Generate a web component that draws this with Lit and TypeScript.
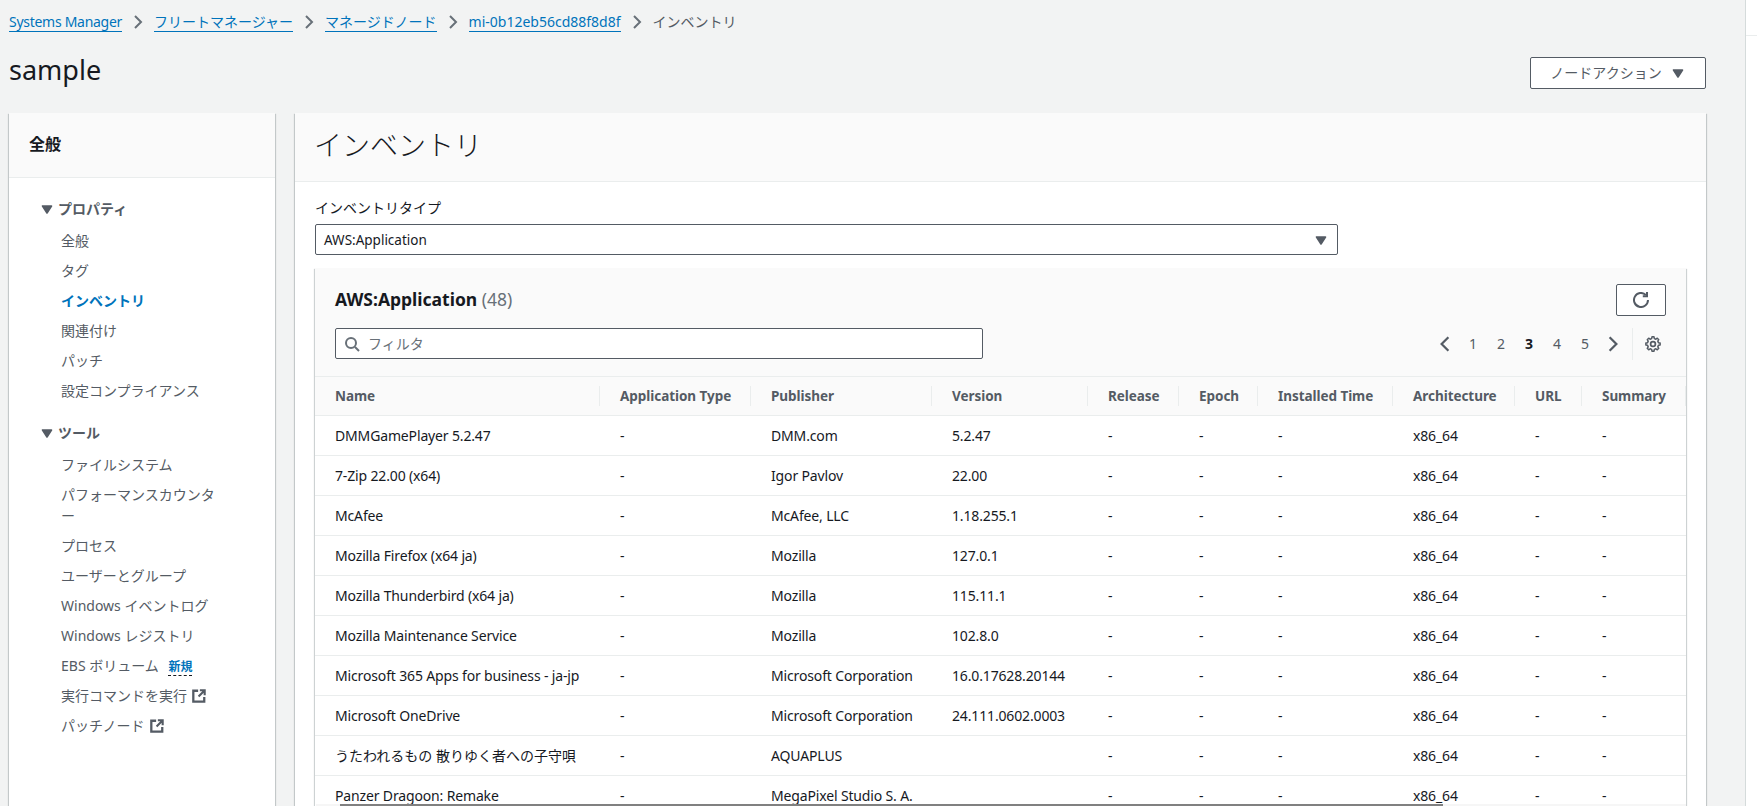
import { LitElement, html, css } from "lit";
import { customElement } from "lit/decorators.js";

const caret = html`<svg class="caret" viewBox="0 0 16 16"><path d="M3.5 5h9L8 12z" fill="#545b64" stroke="#545b64" stroke-width="1.6" stroke-linejoin="round"/></svg>`;
const chev = html`<svg class="chev" viewBox="0 0 16 16"><path d="M5 2l6 6-6 6" fill="none" stroke="#687078" stroke-width="2"/></svg>`;
const ext = html`<svg class="ext" viewBox="0 0 16 16"><path d="M7 2H1.5v12.5H14V9" fill="none" stroke="#545b64" stroke-width="2.6"/><path d="M9 1.5h5.5V7M14 2L7.5 8.5" fill="none" stroke="#545b64" stroke-width="2.4"/></svg>`;

function gearPath(): string {
  const pts: string[] = [];
  const teeth = 8;
  for (let i = 0; i < teeth; i++) {
    const a = (i / teeth) * Math.PI * 2;
    const w = Math.PI / teeth;
    const p = [[5.6, a - w * 0.62], [7.2, a - w * 0.36], [7.2, a + w * 0.36], [5.6, a + w * 0.62]];
    for (const [r, t] of p) pts.push(`${(8 + r * Math.cos(t)).toFixed(2)} ${(8 + r * Math.sin(t)).toFixed(2)}`);
  }
  return "M" + pts.join("L") + "Z";
}

const COLS = ["Name","Application Type","Publisher","Version","Release","Epoch","Installed Time","Architecture","URL","Summary"];
const ROWS: [string,string,string][] = [
  ["DMMGamePlayer 5.2.47","DMM.com","5.2.47"],
  ["7-Zip 22.00 (x64)","Igor Pavlov","22.00"],
  ["McAfee","McAfee, LLC","1.18.255.1"],
  ["Mozilla Firefox (x64 ja)","Mozilla","127.0.1"],
  ["Mozilla Thunderbird (x64 ja)","Mozilla","115.11.1"],
  ["Mozilla Maintenance Service","Mozilla","102.8.0"],
  ["Microsoft 365 Apps for business - ja-jp","Microsoft Corporation","16.0.17628.20144"],
  ["Microsoft OneDrive","Microsoft Corporation","24.111.0602.0003"],
  ["うたわれるもの 散りゆく者への子守唄","AQUAPLUS",""],
  ["Panzer Dragoon: Remake","MegaPixel Studio S. A.",""],
];

@customElement("app-root")
export class AppRoot extends LitElement {
  static styles = css`
    :host { display: block; width: 1757px; height: 806px; overflow: hidden; background: #fff; position: relative;
      font-family: "Noto Sans", "Noto Sans CJK JP", sans-serif; font-size: 14px; line-height: 20px; color: #16191f; }
    * { box-sizing: border-box; }
    .shell { display: flex; height: 806px; }
    .page { width: 1746px; height: 806px; background: #f2f3f3; border-right: 1px solid #d5dbdb; padding: 0 39px 0 9px; overflow: hidden; flex: none; }
    .side-rest { flex: 1; height: 806px; }
    .side-rest div { height: 36px; border-bottom: 1px solid #eaeded; }
    .crumbs { display: flex; align-items: center; height: 44px; }
    .crumbs a { color: #0073bb; border-bottom: 1px solid #0073bb; line-height: 18px; }
    .crumbs a.lat { letter-spacing: -.28px; }
    .crumbs span { color: #545b64; }
    .chev { width: 16px; height: 16px; margin: 0 8px; }
    .head { display: flex; justify-content: space-between; height: 69px; }
    h1 { margin: 9px 0 0; font-size: 27px; font-weight: 400; line-height: 34px; }
    .btn { width: 176px; height: 32px; margin-top: 13px; background: #fff; border: 1px solid #545b64; border-radius: 2px; display: flex; align-items: center; justify-content: center; gap: 8px; color: #545b64; }
    .caret { width: 16px; height: 16px; flex: none; }
    .cols { display: flex; gap: 20px; align-items: flex-start; }
    .card { background: #fff; box-shadow: 0 1px 1px 0 rgba(0,28,36,.3), 1px 1px 1px 0 rgba(0,28,36,.15), -1px 1px 1px 0 rgba(0,28,36,.15); height: 800px; flex: none; }
    .nav { width: 266px; }
    .nav-head { height: 65px; background: #fafafa; border-bottom: 1px solid #eaeded; padding: 19px 20px; font-size: 16px; font-weight: 700; line-height: 24px; }
    .nav-body { padding: 20px 0 0 30px; }
    .sec { display: flex; align-items: center; gap: 3px; height: 22px; font-weight: 700; color: #545b64; margin-bottom: 10px; }
    .sec.second { margin-top: 21px; }
    .item { display: block; width: 165px; margin: 0 0 9px 22px; line-height: 21px; color: #545b64; line-break: anywhere; }
    .item.active { color: #0073bb; font-weight: 700; }
    .new { color: #0073bb; font-weight: 700; font-size: 12px; border-bottom: 1px dashed #16191f; margin-left: 6px; line-height: 16px; display: inline-block; }
    .ext { width: 14px; height: 14px; vertical-align: -2px; margin-left: 5px; }
    .main { width: 1411px; }
    .main-head { height: 69px; background: #fafafa; border-bottom: 1px solid #eaeded; padding: 13px 19px; font-size: 28px; font-weight: 300; line-height: 38px; }
    .main-body { padding: 16px 20px 0; }
    label { display: block; line-height: 20px; margin-bottom: 6px; color: #16191f; }
    .select { height: 31px; width: 1023px; background: #fff; border: 1px solid #545b64; border-radius: 2px; display: flex; align-items: center; justify-content: space-between; padding: 0 8px 0 8px; margin-bottom: 13px; font-size: 13.5px; }
    .table { width: 1371px; background: #fff; box-shadow: 0 1px 1px 0 rgba(0,28,36,.3), 1px 1px 1px 0 rgba(0,28,36,.15), -1px 1px 1px 0 rgba(0,28,36,.15); }
    .thead { background: #fafafa; padding: 16px 20px 0; height: 109px; border-bottom: 1px solid #eaeded; }
    .tt { display: flex; justify-content: space-between; height: 44px; }
    .tt h2 { margin: 3px 0 0; font-size: 17.5px; font-weight: 700; line-height: 24px; }
    .tt h2 span { color: #687078; font-weight: 400; }
    .refresh { width: 50px; height: 32px; background: #fff; border: 1px solid #545b64; border-radius: 2px; display: flex; align-items: center; justify-content: center; }
    .refresh svg { width: 16px; height: 16px; }
    .tools { display: flex; justify-content: space-between; align-items: center; height: 31px; }
    .filter { width: 648px; height: 31px; background: #fff; border: 1px solid #545b64; border-radius: 2px; display: flex; align-items: center; gap: 8px; padding: 0 8px; color: #687078; }
    .filter svg { width: 16px; height: 16px; }
    .pager { display: flex; align-items: center; color: #545b64; }
    .pg { width: 28px; text-align: center; }
    .pg svg { width: 18px; height: 18px; display: block; margin: 0 auto; }
    .pg.on { color: #16191f; font-weight: 700; }
    .gear { border-left: 1px solid #eaeded; height: 32px; width: 34px; margin-left: 5px; display: flex; align-items: center; padding-left: 12px; }
    .gear svg { width: 16px; height: 16px; flex: none; }
    .row { display: grid; grid-template-columns: 285px 151px 181px 156px 91px 79px 135px 122px 67px 104px; height: 40px; border-bottom: 1px solid #eaeded; align-items: center; letter-spacing: -.15px; }
    .row > div { padding-left: 20px; white-space: nowrap; }
    .row.h { height: 39px; background: #fafafa; font-weight: 700; color: #545b64; font-size: 13.5px; letter-spacing: -.05px; }
    .row.h > div { height: 20px; border-right: 1px solid #eaeded; line-height: 20px; }
    .cjk { letter-spacing: 0; }
    .track { position: absolute; left: 316px; top: 804px; width: 1370px; height: 2px; background: #f6f6f6; }
    .thumb { width: 1103px; margin-left: 24px; height: 2px; background: #808080; }
  `;

  render() {
    const items1 = ["全般","タグ","インベントリ","関連付け","パッチ","設定コンプライアンス"];
    return html`
      <div class="shell">
      <div class="page">
        <nav class="crumbs">
          <a class="lat">Systems Manager</a>${chev}<a>フリートマネージャー</a>${chev}<a>マネージドノード</a>${chev}<a>mi-0b12eb56cd88f8d8f</a>${chev}<span>インベントリ</span>
        </nav>
        <div class="head">
          <h1>sample</h1>
          <div class="btn">ノードアクション ${caret}</div>
        </div>
        <div class="cols">
          <aside class="card nav">
            <div class="nav-head">全般</div>
            <div class="nav-body">
              <div class="sec">${caret}プロパティ</div>
              ${items1.map(t => html`<a class="item ${t==="インベントリ"?"active":""}">${t}</a>`)}
              <div class="sec second">${caret}ツール</div>
              <a class="item">ファイルシステム</a>
              <a class="item">パフォーマンスカウンター</a>
              <a class="item">プロセス</a>
              <a class="item">ユーザーとグループ</a>
              <a class="item">Windows イベントログ</a>
              <a class="item">Windows レジストリ</a>
              <a class="item">EBS ボリューム <span class="new">新規</span></a>
              <a class="item">実行コマンドを実行${ext}</a>
              <a class="item">パッチノード${ext}</a>
            </div>
          </aside>
          <section class="card main">
            <div class="main-head">インベントリ</div>
            <div class="main-body">
              <label>インベントリタイプ</label>
              <div class="select">AWS:Application ${caret}</div>
              <div class="table">
                <div class="thead">
                  <div class="tt">
                    <h2>AWS:Application <span>(48)</span></h2>
                    <div class="refresh"><svg viewBox="0 0 16 16"><path d="M15 8a7 7 0 1 1-2.2-5.1" fill="none" stroke="#545b64" stroke-width="2"/><path d="M14 0v4.2h-4.2" fill="none" stroke="#545b64" stroke-width="2"/></svg></div>
                  </div>
                  <div class="tools">
                    <div class="filter"><svg viewBox="0 0 16 16"><circle cx="7" cy="7" r="5" fill="none" stroke="#687078" stroke-width="2"/><path d="M11 11l4 4" stroke="#687078" stroke-width="2"/></svg>フィルタ</div>
                    <div class="pager">
                      <div class="pg"><svg viewBox="0 0 16 16"><path d="M11 2L5 8l6 6" fill="none" stroke="#545b64" stroke-width="2"/></svg></div>
                      <div class="pg">1</div><div class="pg">2</div><div class="pg on">3</div><div class="pg">4</div><div class="pg">5</div>
                      <div class="pg"><svg viewBox="0 0 16 16"><path d="M5 2l6 6-6 6" fill="none" stroke="#545b64" stroke-width="2"/></svg></div>
                      <div class="gear"><svg viewBox="0 0 16 16"><circle cx="8" cy="8" r="2.4" fill="none" stroke="#545b64" stroke-width="1.7"/><path d="${gearPath()}" fill="none" stroke="#545b64" stroke-width="1.5" stroke-linejoin="round"/></svg></div>
                    </div>
                  </div>
                </div>
                <div class="row h">${COLS.map(c => html`<div>${c}</div>`)}</div>
                ${ROWS.map(r => html`<div class="row"><div class="${/[ぁ-ん]/.test(r[0]) ? "cjk" : ""}">${r[0]}</div><div>-</div><div>${r[1]}</div><div>${r[2]}</div><div>-</div><div>-</div><div>-</div><div>x86_64</div><div>-</div><div>-</div></div>`)}
              </div>
            </div>
          </section>
        </div>
      </div>
      <div class="side-rest"><div></div></div>
      </div>
      <div class="track"><div class="thumb"></div></div>
    `;
  }
}
